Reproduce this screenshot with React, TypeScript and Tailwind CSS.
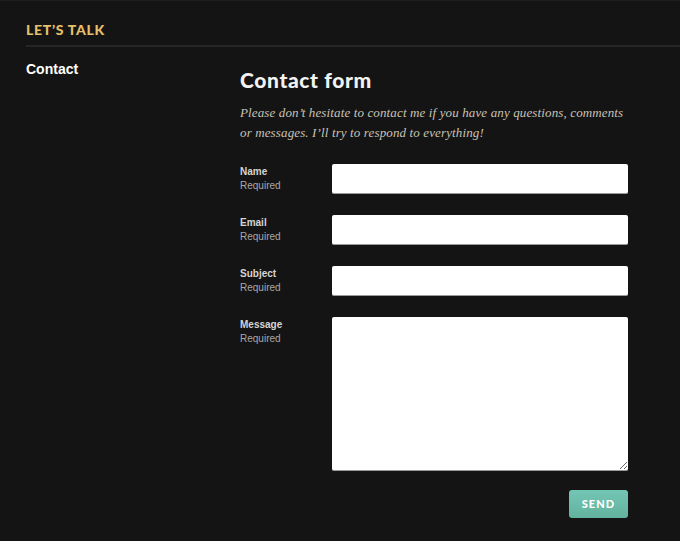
import React from 'react';

const FIELDS = [
    { id: 'name', label: 'Name' },
    { id: 'email', label: 'Email' },
    { id: 'subject', label: 'Subject' },
];

function FieldLabel({ label }: { label: string }) {
    return (
        <div className="w-[92px] shrink-0 pt-[1px] font-['Liberation_Sans',Arial,sans-serif] text-[10px] leading-[14px]">
            <div className="font-bold text-[#d4d4d4]">{label}</div>
            <div className="text-[#a8a8a8]">Required</div>
        </div>
    );
}

export default function App() {
    return (
        <div className="min-h-[541px] w-full bg-[#141414] border-t border-[#1d1d1d]">
            {/* Header */}
            <div className="pl-[26px]">
                <div className="h-[46px] flex items-center border-b-2 border-[#262626]">
                    <span className="pt-[12px] font-['Lato',sans-serif] font-black text-[14px] tracking-[0.05em] text-[#e6c06a]">
                        LET’S TALK
                    </span>
                </div>
            </div>

            <div className="flex px-[26px]">
                {/* Sidebar */}
                <div className="w-[214px] shrink-0 pt-[9px]">
                    <span className="font-['Liberation_Sans',Arial,sans-serif] font-bold text-[14px] text-white">
                        Contact
                    </span>
                </div>

                {/* Main */}
                <div className="w-[388px] pt-[20px]">
                    <h1 className="font-['Lato',sans-serif] font-black text-[21px] leading-[26px] tracking-[0.03em] text-[#f2f2f2]">
                        Contact form
                    </h1>
                    <p className="w-[384px] mt-[10px] font-['Liberation_Serif',serif] italic text-[13px] leading-[20px] tracking-[0.01em] text-[#c9c2b4]">
                        Please don’t hesitate to contact me if you have any questions, comments or messages. I’ll try to respond to everything!
                    </p>

                    <form className="mt-[21px] flex flex-col gap-[21px]" onSubmit={(e) => e.preventDefault()}>
                        {FIELDS.map((f) => (
                            <div key={f.id} className="flex">
                                <FieldLabel label={f.label} />
                                <input
                                    type="text"
                                    className="h-[30px] w-[296px] rounded-[2px] bg-white border-b border-[#9a9a9a] outline-none px-2 text-sm"
                                />
                            </div>
                        ))}
                        <div className="flex">
                            <FieldLabel label="Message" />
                            <textarea className="h-[154px] w-[296px] rounded-[2px] bg-white border-b border-[#9a9a9a] outline-none px-2 py-1 text-sm" />
                        </div>
                        <div className="flex justify-end -mt-[2px]">
                            <button
                                type="submit"
                                className="h-[28px] w-[59px] rounded-[3px] bg-gradient-to-b from-[#74c6b4] to-[#62b29f] font-['Lato',sans-serif] font-black text-[11px] tracking-[0.1em] text-white"
                            >
                                SEND
                            </button>
                        </div>
                    </form>
                </div>
            </div>
        </div>
    );
}
